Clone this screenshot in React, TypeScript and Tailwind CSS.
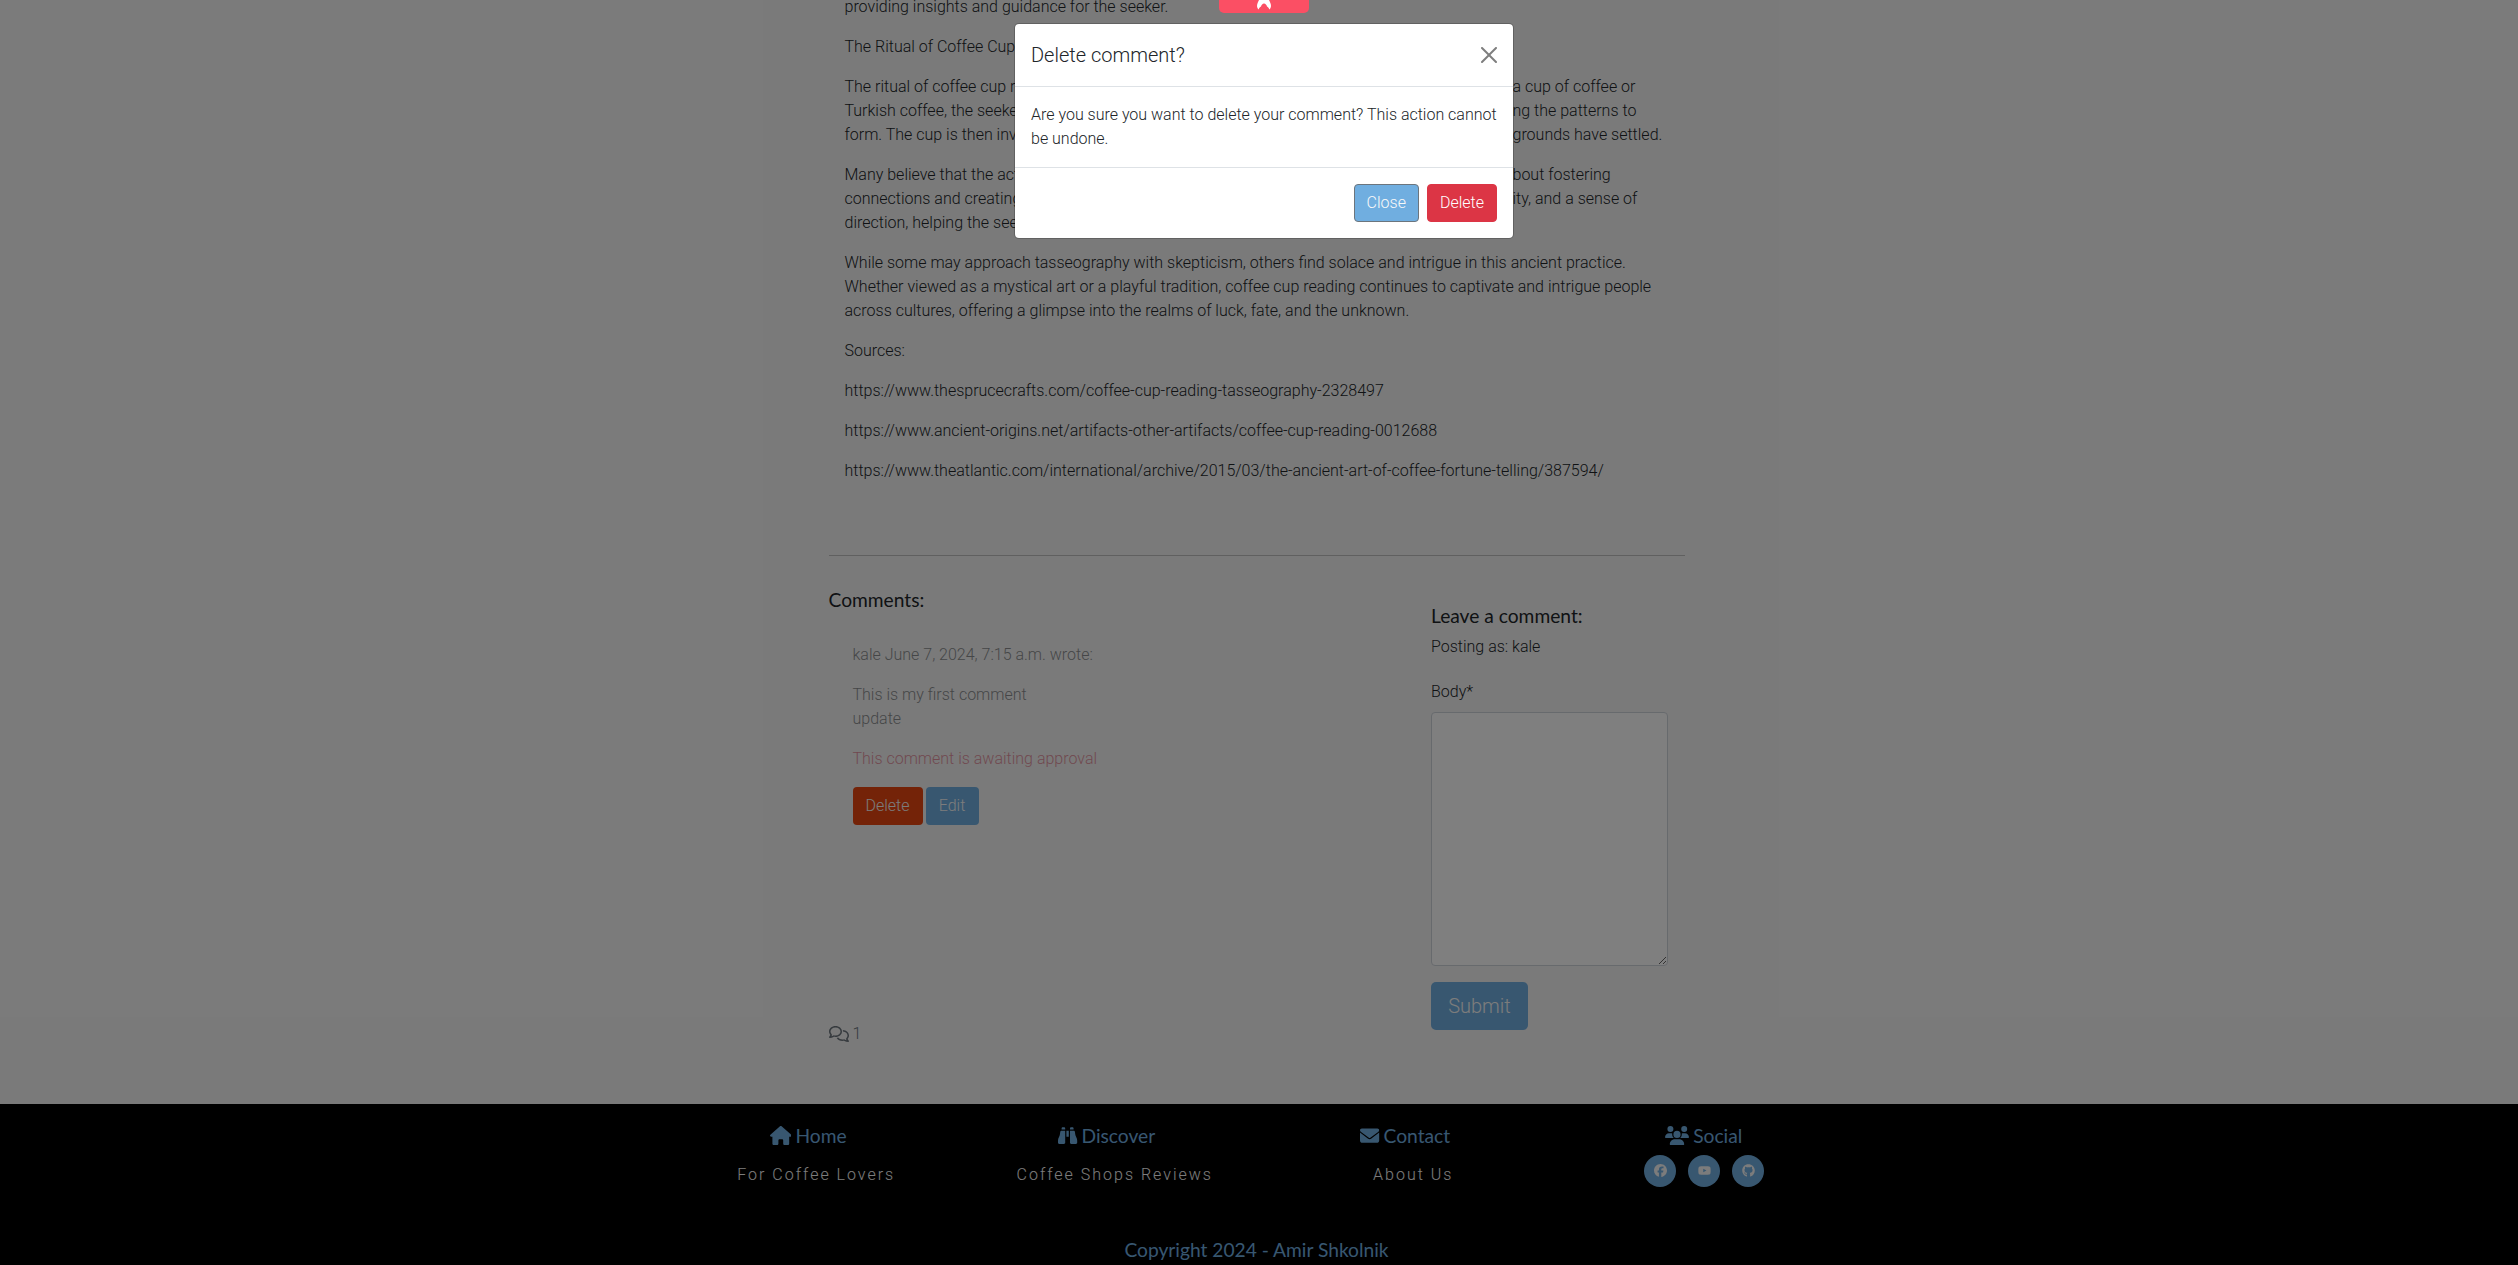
import { ReactNode } from 'react';
import { FaHouse, FaBinoculars, FaEnvelope, FaUsers, FaFacebook, FaYoutube, FaGithub, FaRegComments } from 'react-icons/fa6';

function FooterHeading({ icon, children }: { icon: ReactNode; children: ReactNode }) {
  return (
    <h5 className="flex h-[23px] items-center justify-center gap-1 font-[Lato,sans-serif] text-[19.2px] leading-[23px] text-[#70aee0]">
      {icon}
      <span>{children}</span>
    </h5>
  );
}

function FooterColumn({ icon, title, link }: { icon: ReactNode; title: string; link: string }) {
  return (
    <div className="w-[298.5px] text-center">
      <FooterHeading icon={icon}>{title}</FooterHeading>
      <p className="mt-4 pl-4 font-light tracking-[2px] text-[#f9f9f9]">{link}</p>
    </div>
  );
}

function SocialLink({ children }: { children: ReactNode }) {
  return (
    <a className="flex size-8 items-center justify-center rounded-full bg-[#70aee0] pb-0.5 pl-px text-[13px] text-[#f9f9f9]">
      {children}
    </a>
  );
}

const sources = [
  'https://www.thesprucecrafts.com/coffee-cup-reading-tasseography-2328497',
  'https://www.ancient-origins.net/artifacts-other-artifacts/coffee-cup-reading-0012688',
  'https://www.theatlantic.com/international/archive/2015/03/the-ancient-art-of-coffee-fortune-telling/387594/',
];

function Article() {
  return (
    <article className="-mt-[5px] flex h-[561px] flex-col gap-4 border-b border-[#c0c0c0] pl-4 whitespace-nowrap">
      <p>providing insights and guidance for the seeker.</p>
      <p>The Ritual of Coffee Cup</p>
      <p>
        The ritual of coffee cup reading
        <span className="float-right w-[172px]">a cup of coffee or</span>
        <br />
        Turkish coffee, the seeker
        <span className="float-right w-[172px]">ng the patterns to</span>
        <br />
        form. The cup is then inverted
        <span className="float-right w-[172px]">grounds have settled.</span>
      </p>
      <p>
        Many believe that the act of
        <span className="float-right w-[172px]">bout fostering</span>
        <br />
        connections and creating
        <span className="float-right w-[172px]">ity, and a sense of</span>
        <br />
        direction, helping the seeker
      </p>
      <p>
        While some may approach tasseography with skepticism, others find solace and intrigue in this ancient practice.
        <br />
        Whether viewed as a mystical art or a playful tradition, coffee cup reading continues to captivate and intrigue people
        <br />
        across cultures, offering a glimpse into the realms of luck, fate, and the unknown.
      </p>
      <p>Sources:</p>
      {sources.map((s) => (
        <p key={s}>{s}</p>
      ))}
    </article>
  );
}

function DeleteDialog() {
  return (
    <div className="absolute top-[23px] left-[1014px] w-[500px] rounded-[5px] border border-black/20 bg-white bg-clip-padding text-[#212529]">
      <div className="flex h-[63px] items-center justify-between border-b border-[#dee2e6] px-4">
        <h5 className="text-[20px] leading-[30px]">Delete comment?</h5>
        <svg className="size-4 opacity-50" viewBox="0 0 16 16" fill="#000">
          <path d="M.293.293a1 1 0 011.414 0L8 6.586 14.293.293a1 1 0 111.414 1.414L9.414 8l6.293 6.293a1 1 0 01-1.414 1.414L8 9.414l-6.293 6.293a1 1 0 01-1.414-1.414L6.586 8 .293 1.707a1 1 0 010-1.414z" />
        </svg>
      </div>
      <div className="h-20 p-4">Are you sure you want to delete your comment? This action cannot be undone.</div>
      <div className="flex justify-end gap-2 border-t border-[#dee2e6] p-4">
        <button className="h-[38px] rounded border border-[#6c757d] bg-[#70aee0] px-3 text-[#f9f9f9]">Close</button>
        <button className="h-[38px] rounded border border-[#dc3545] bg-[#dc3545] px-3 text-white">Delete</button>
      </div>
    </div>
  );
}

export default function App() {
  return (
    <div className="relative h-[1265px] w-[2518px] overflow-hidden bg-[#f5f5f5] font-[Roboto,sans-serif] text-[16px] leading-6 font-light text-[#212529]">
      <main className="ml-[828.5px] flow-root h-[1104px] w-[856px]">
        <Article />
        <div className="flex justify-between">
          <section className="flex h-[490px] flex-col pt-8">
            <h3 className="font-[Lato,sans-serif] text-[19.2px] leading-[23px] font-normal">Comments:</h3>
            <div className="mt-8 ml-6 opacity-50">
              <p>kale June 7, 2024, 7:15 a.m. wrote:</p>
              <p className="mt-4">
                This is my first comment
                <br />
                update
              </p>
              <p className="mt-4 text-[#d0304c]">This comment is awaiting approval</p>
            </div>
            <div className="mt-4 ml-6 flex gap-[3px]">
              <button className="h-[38px] w-[70px] rounded bg-[#e84610] text-[#f9f9f9]">Delete</button>
              <button className="h-[38px] w-[53px] rounded bg-[#70aee0] text-[#f9f9f9]">Edit</button>
            </div>
            <div className="mt-auto flex items-center gap-1 text-[#6c757d]">
              <FaRegComments className="size-5" />
              <span>1</span>
            </div>
          </section>
          <section className="mr-[17px] w-[236.500px] pt-12">
            <h3 className="font-[Lato,sans-serif] text-[19.2px] leading-[23px] font-normal">Leave a comment:</h3>
            <p className="mt-2">Posting as: kale</p>
            <label className="mt-[21px] block">Body*</label>
            <textarea className="mt-2 block h-[254px] w-full resize rounded border border-[#ced4da] bg-white" />
            <button className="mt-4 block h-12 w-[97px] rounded-[5px] bg-[#70aee0] text-[20px] text-[#f9f9f9]">Submit</button>
          </section>
        </div>
      </main>

      <footer className="h-[161px] bg-black font-normal">
        <div className="ml-[659px] flex pt-5">
          <FooterColumn icon={<FaHouse className="h-[19.2px] w-[21.6px]" />} title="Home" link="For Coffee Lovers" />
          <FooterColumn icon={<FaBinoculars />} title="Discover" link="Coffee Shops Reviews" />
          <FooterColumn icon={<FaEnvelope />} title="Contact" link="About Us" />
          <div className="w-[298.5px]">
            <FooterHeading icon={<FaUsers className="h-[19.2px] w-6" />}>Social</FooterHeading>
            <div className="mt-2 flex justify-center gap-3">
              <SocialLink><FaFacebook /></SocialLink>
              <SocialLink><FaYoutube /></SocialLink>
              <SocialLink><FaGithub /></SocialLink>
            </div>
          </div>
        </div>
        <p className="mt-[51px] w-[2513px] text-center font-[Lato,sans-serif] text-[19.2px] leading-[23px] text-[#70aee0]">
          Copyright 2024 - Amir Shkolnik
        </p>
      </footer>

      <div className="absolute inset-0 bg-black/50" />
      <div className="absolute top-0 left-[1219px] flex h-[13px] w-[90px] items-start justify-center rounded-b-[5px] bg-[#fb4f64]">
        <svg className="h-[10px] w-[14px]" viewBox="0 0 14 10" fill="#fff">
          <path d="M2 0H12C13 2 14 4 14 6C14 7.500 13 9 12.200 9.500C12.200 8 11 7 10 6.500C9.500 5 8.500 3.600 7 3.600C5.500 3.600 4.500 5 4 6.500C3 7 1.800 8 1.800 9.500C1 9 0 7.500 0 6C0 4 1 2 2 0Z" />
        </svg>
      </div>
      <DeleteDialog />
    </div>
  );
}
